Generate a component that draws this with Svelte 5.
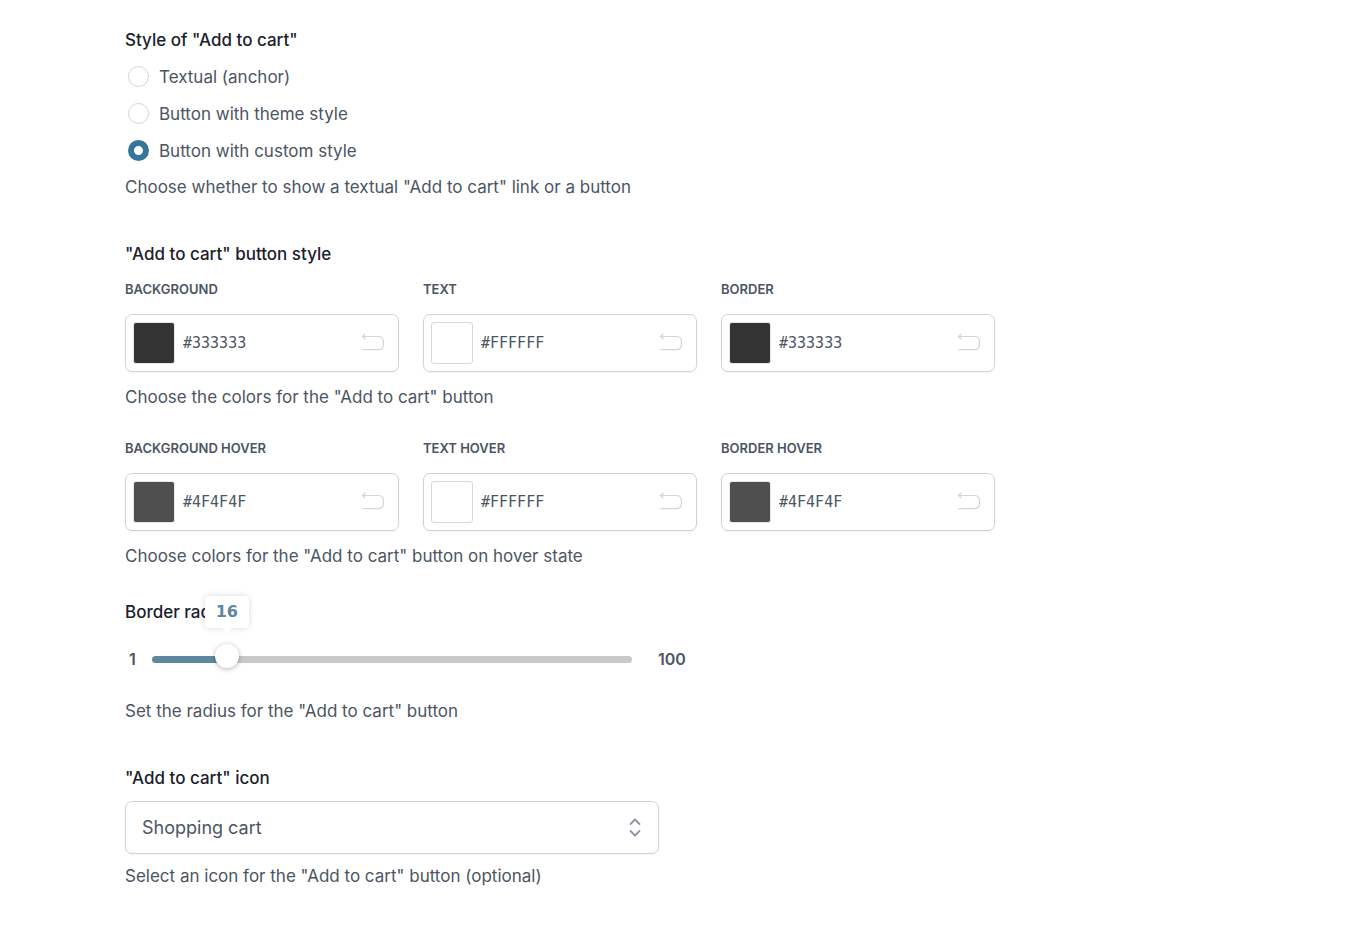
<script>
  const styles = [
    { value: "anchor", label: "Textual (anchor)" },
    { value: "theme", label: "Button with theme style" },
    { value: "custom", label: "Button with custom style" }
  ];

  const rows = [
    {
      help: 'Choose the colors for the "Add to cart" button',
      fields: [
        { id: "bg", label: "Background", initial: "#333333" },
        { id: "text", label: "Text", initial: "#FFFFFF" },
        { id: "border", label: "Border", initial: "#333333" }
      ]
    },
    {
      help: 'Choose colors for the "Add to cart" button on hover state',
      fields: [
        { id: "bg-hover", label: "Background hover", initial: "#4F4F4F" },
        { id: "text-hover", label: "Text hover", initial: "#FFFFFF" },
        { id: "border-hover", label: "Border hover", initial: "#4F4F4F" }
      ]
    }
  ];

  const MIN = 1;
  const MAX = 100;

  let style = $state("custom");
  let colors = $state(
    Object.fromEntries(rows.flatMap((r) => r.fields).map((f) => [f.id, f.initial]))
  );
  let radius = $state(16);
  let icon = $state("cart");

  let ratio = $derived((radius - MIN) / (MAX - MIN));
</script>

<main class="settings">
  <section>
    <fieldset>
      <legend class="title">Style of "Add to cart"</legend>
      {#each styles as s}
        <label class="radio">
          <input type="radio" name="style" value={s.value} bind:group={style}>
          <span>{s.label}</span>
        </label>
      {/each}
    </fieldset>
    <p class="help radio-help">Choose whether to show a textual "Add to cart" link or a button</p>
  </section>

  <section>
    <h2 class="title">"Add to cart" button style</h2>
    {#each rows as row}
      <div class="color-row">
        <div class="colors">
          {#each row.fields as f}
            <div class="field">
              <label class="caption" for={f.id}>{f.label}</label>
              <div class="picker">
                <span class="swatch" class:light={colors[f.id].toUpperCase() === "#FFFFFF"} style="background-color: {colors[f.id]}"></span>
                <input id={f.id} type="text" class="hex" spellcheck="false" bind:value={colors[f.id]}>
                <button type="button" class="reset" aria-label="Reset" onclick={() => (colors[f.id] = f.initial)}>
                  <svg width="24" height="20" viewBox="0 0 24 20" fill="none" stroke="currentColor" stroke-width="1.2">
                    <path d="M4.500 .8 1.500 3.500 4.500 6.200" />
                    <path d="M1.500 3.500H17c3.600 0 5.400 1.600 5.400 5v3.200c0 3.300-1.800 5-5.400 5H1.500" />
                  </svg>
                </button>
              </div>
            </div>
          {/each}
        </div>
        <p class="help">{row.help}</p>
      </div>
    {/each}

    <div class="radius">
      <label class="title" for="radius">Border radius</label>
      <div class="slider">
        <span class="min">{MIN}</span>
        <div class="track" style="--ratio: {ratio}">
          <input id="radius" type="range" min={MIN} max={MAX} bind:value={radius}>
          <output class="bubble" for="radius">{radius}</output>
        </div>
        <span class="max">{MAX}</span>
      </div>
      <p class="help">Set the radius for the "Add to cart" button</p>
    </div>
  </section>

  <section>
    <label class="title" for="icon">"Add to cart" icon</label>
    <div class="select">
      <select id="icon" bind:value={icon}>
        <option value="cart">Shopping cart</option>
      </select>
      <svg width="12" height="20" viewBox="0 0 12 20" fill="none" stroke="#8d95a3" stroke-width="1.8" stroke-linecap="round" stroke-linejoin="round">
        <path d="M1.5 6 6 1.500l4.500 4.500" />
        <path d="M1.5 13 6 17.500l4.500-4.500" />
      </svg>
    </div>
    <p class="help select-help">Select an icon for the "Add to cart" button (optional)</p>
  </section>
</main>

<style>
  :global(body) { margin: 0; background: #fff; }

  .settings {
    box-sizing: border-box;
    max-width: 1120px;
    padding: 28px 125px;
    display: flex;
    flex-direction: column;
    gap: 43px;
    font: 17px/24px Inter, sans-serif;
    color: #4b5563;
  }

  * { box-sizing: border-box; }
  fieldset { border: 0; margin: 0; padding: 0; min-width: 0; }
  input, select, button { font: inherit; color: inherit; margin: 0; }

  .title {
    display: block;
    margin: 0;
    padding: 0;
    font-size: 17px;
    font-weight: 500;
    line-height: 24px;
    color: #1b212c;
  }
  .help { margin: 13px 0 0; }

  .radio { display: flex; align-items: center; gap: 10px; height: 37px; padding-left: 3px; }
  legend + .radio { margin-top: 6px; }
  .radio input {
    appearance: none;
    width: 21px;
    height: 21px;
    border: 1px solid #d1d5db;
    border-radius: 50%;
    background: #fff;
  }
  .radio input:checked { border: 6px solid #35759a; }
  .radio-help { margin-top: 6px; }

  .color-row { margin-top: 13px; }
  .color-row + .color-row { margin-top: 29px; }
  .colors { display: grid; grid-template-columns: repeat(3, minmax(0, 1fr)); gap: 24px; }
  .caption {
    display: block;
    margin-bottom: 15px;
    font-size: 13px;
    font-weight: 600;
    line-height: 20px;
    text-transform: uppercase;
  }
  .picker {
    display: flex;
    align-items: center;
    height: 58px;
    padding: 0 13px 0 7px;
    border: 1px solid #ccd3da;
    border-radius: 7px;
    box-shadow: 0 1px 2px rgba(0, 0, 0, .05);
  }
  .swatch { flex: none; width: 42px; height: 42px; border: 1px solid #e4e6e8; border-radius: 3px; }
  .swatch.light { border-color: #d6d9dc; }
  .hex {
    flex: 1;
    min-width: 0;
    padding: 0 8px;
    border: 0;
    outline: 0;
    background: none;
    font: 15px/24px "DejaVu Sans Mono", monospace;
  }
  .reset { display: flex; padding: 0; border: 0; background: none; color: #d3d5d7; cursor: pointer; }

  .radius { margin-top: 32px; }
  .slider {
    display: flex;
    align-items: center;
    margin-top: 20px;
    height: 30px;
    font-size: 16px;
    font-weight: 600;
  }
  .min { width: 27px; padding-left: 4px; }
  .max { padding-left: 26px; }
  .track {
    --thumb: calc(3px + (100% - 6px) * var(--ratio));
    position: relative;
    width: 480px;
    height: 7px;
    border-radius: 4px;
    background: linear-gradient(#5d889d, #5d889d) 0 0 / var(--thumb) 100% no-repeat #c9c9c9;
  }
  .track input {
    appearance: none;
    position: absolute;
    top: -12px;
    left: -9px;
    width: calc(100% + 18px);
    height: 24px;
    background: none;
    outline: 0;
  }
  .track input::-webkit-slider-thumb {
    appearance: none;
    width: 24px;
    height: 24px;
    border: 0;
    border-radius: 50%;
    background: #fff;
    box-shadow: 0 1px 5px rgba(0, 0, 0, .3);
  }
  .track input::-moz-range-thumb {
    width: 24px;
    height: 24px;
    border: 0;
    border-radius: 50%;
    background: #fff;
    box-shadow: 0 1px 5px rgba(0, 0, 0, .3);
  }
  .bubble {
    position: absolute;
    bottom: 35px;
    left: var(--thumb);
    width: 44px;
    height: 32px;
    transform: translateX(-50%);
    border-radius: 4px;
    background: #fff;
    box-shadow: 0 0 6px rgba(0, 0, 0, .15);
    color: #5d889d;
    font: 700 16px/32px "DejaVu Sans", sans-serif;
    text-align: center;
  }
  .bubble::after {
    content: "";
    position: absolute;
    top: 100%;
    left: 50%;
    margin-left: -5px;
    border: 5px solid transparent;
    border-top-color: #fff;
    border-bottom: 0;
  }
  .radius .help { margin-top: 25px; }

  .select { position: relative; max-width: 534px; margin-top: 11px; }
  .select select {
    appearance: none;
    display: block;
    width: 100%;
    height: 53px;
    padding: 0 44px 0 16px;
    border: 1px solid #ccd3da;
    border-radius: 7px;
    background: #fff;
    box-shadow: 0 1px 2px rgba(0, 0, 0, .05);
    font-size: 18px;
  }
  .select svg { position: absolute; top: 17px; right: 18px; pointer-events: none; }
  .select-help { margin-top: 10px; }
</style>
